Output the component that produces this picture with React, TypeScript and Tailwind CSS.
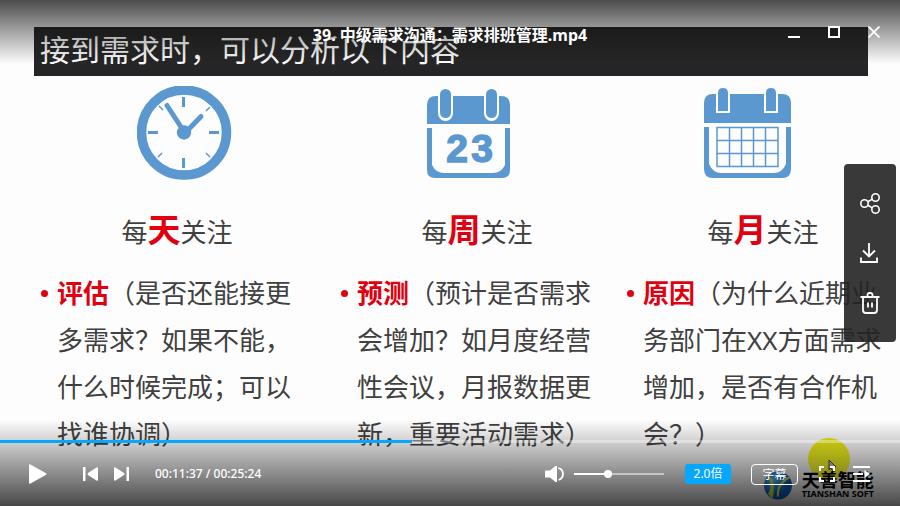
import { useState } from "react";

type Topic = {
  word: string;
  lead: string;
  lines: string[];
  icon: () => React.ReactElement;
  iconPad: string;
};

const BLUE = "#5b98d0";

function ClockIcon() {
  return (
    <svg width="95" height="96" viewBox="0 0 95 96" fill="none" stroke={BLUE} aria-hidden="true">
      <circle cx="47" cy="46.500" r="42.500" strokeWidth="9.500" />
      <path d="M46.500 11v10M46.500 72v10M11 46.500h10M72 46.500h10" strokeWidth="3" />
      <path d="M22 20l4 4M73 21l-4 4M21 71l4-4M73 71l-4-4" strokeWidth="1.500" />
      <path d="M30 19.500L46 44" strokeWidth="5" strokeLinecap="round" />
      <path d="M64 30.500L49 46" strokeWidth="5" strokeLinecap="round" />
      <circle cx="47" cy="46.500" r="7.200" fill={BLUE} stroke="none" />
    </svg>
  );
}

function DayCalendarIcon() {
  return (
    <svg width="84" height="96" viewBox="0 0 84 96" aria-hidden="true">
      <path d="M0 38V19q0-9 9-9h65q9 0 9 9v19z" fill={BLUE} />
      <path d="M0 42h5v37q4 8 12 8h49q8 0 12-8V42h5v42q0 8-8 8H8q-8 0-8-8z" fill={BLUE} />
      <rect x="11" y="1" width="15" height="34" rx="7.500" fill="#fdfdfd" />
      <rect x="57" y="1" width="15" height="34" rx="7.500" fill="#fdfdfd" />
      <rect x="13" y="3" width="11" height="29" rx="5.500" fill={BLUE} />
      <rect x="59" y="3" width="11" height="29" rx="5.500" fill={BLUE} />
      <text x="30 55" y="76" textAnchor="middle" fill={BLUE} stroke={BLUE} strokeWidth="1.500" fontSize="39" fontWeight="700" fontFamily="Liberation Sans, Arial, sans-serif">
        23
      </text>
    </svg>
  );
}

function MonthCalendarIcon() {
  return (
    <svg width="87" height="96" viewBox="0 0 87 96" aria-hidden="true">
      <path d="M0 37V17q0-9 9-9h69q9 0 9 9v20z" fill={BLUE} />
      <path d="M0 41h5v37q4 9 12 9h53q8 0 12-9V41h5v42q0 9-9 9H9q-9 0-9-9z" fill={BLUE} />
      <path d="M12 27V8q0-7 7-7t7 7v19zM60 27V8q0-7 7-7t7 7v19z" fill="#fdfdfd" />
      <path d="M14 25V7q0-5 5-5t5 5v18zM62 25V7q0-5 5-5t5 5v18z" fill={BLUE} />
      <path d="M13 41.500h61v39H13zM25.500 41v39M37.500 41v39M49.500 41v39M61.500 41v39M13 54.500h61M13 67.500h61" fill="none" stroke={BLUE} strokeWidth="1.500" />
    </svg>
  );
}

const topics: Topic[] = [
  {
    word: "天",
    lead: "评估",
    lines: ["（是否还能接更", "多需求？如果不能，", "什么时候完成；可以", "找谁协调）"],
    icon: ClockIcon,
    iconPad: "pl-24",
  },
  {
    word: "周",
    lead: "预测",
    lines: ["（预计是否需求", "会增加？如月度经营", "性会议，月报数据更", "新，重要活动需求）"],
    icon: DayCalendarIcon,
    iconPad: "pl-[86px]",
  },
  {
    word: "月",
    lead: "原因",
    lines: ["（为什么近期业", "务部门在XX方面需求", "增加，是否有合作机", "会？）"],
    icon: MonthCalendarIcon,
    iconPad: "pl-[77px]",
  },
];

function TopicColumn({ topic }: { topic: Topic }) {
  const Icon = topic.icon;
  return (
    <section className="whitespace-nowrap">
      <div className={topic.iconPad}>
        <Icon />
      </div>
      <h2 className="mt-[22px] flex h-14 w-[272px] items-baseline justify-center text-[26px] leading-[52px]">
        每<strong className="text-[33px] font-bold text-[#e0000f]">{topic.word}</strong>关注
      </h2>
      <div className="mt-[10px] flex text-[26px] leading-[47px]">
        <span className="flex h-[47px] w-4 shrink-0 items-center" aria-hidden="true">
          <span className="size-[7px] rounded-full bg-[#e0000f]" />
        </span>
        <p>
          <strong className="font-bold text-[#e0000f]">{topic.lead}</strong>
          {topic.lines.map((line, i) => (
            <span key={line}>
              {i > 0 && <br />}
              {line}
            </span>
          ))}
        </p>
      </div>
    </section>
  );
}

function Slide() {
  return (
    <div className="h-full bg-[#fdfdfd] pt-[27px] text-[#404040]">
      <h1 className="mr-8 ml-[34px] h-[49px] bg-linear-to-b from-[#2c2c2c] to-[#242426] pl-1.5 text-[30px] leading-[45px] whitespace-nowrap text-white">
        接到需求时，可以分析以下内容
      </h1>
      <div className="grid grid-cols-[300fr_286fr_273fr] pt-[10px] pl-[41px]">
        {topics.map((topic) => (
          <TopicColumn key={topic.word} topic={topic} />
        ))}
      </div>
      <div className="absolute right-[50px] bottom-[26px] size-[42px] rounded-full bg-linear-to-b from-[#eaed0a] to-[#ffff30]" />
      <svg className="absolute right-[62px] bottom-[32px]" width="10" height="15" viewBox="0 0 10 15" fill="#c8c8c8" stroke="#4a4a30" aria-hidden="true">
        <path d="M1 1v10l2-2 2 4 2-1-2-4h3z" />
      </svg>
      <div className="absolute right-[26px] bottom-1.5 flex items-center gap-2 text-black">
        <svg width="31" height="29" viewBox="0 0 31 29" aria-hidden="true">
          <defs>
            <radialGradient id="globe" cx="35%" cy="30%">
              <stop offset="0" stopColor="#5cc4ff" />
              <stop offset="1" stopColor="#1060c8" />
            </radialGradient>
          </defs>
          <circle cx="15" cy="14.500" r="14" fill="url(#globe)" />
          <path d="M4 6Q13 4 10 27q-3-1-5-4Q11 12 4 6zM14 26Q12 12 27 5q1 2-3 4Q15 15 16 25z" fill="#c8f050" />
        </svg>
        <div>
          <div className="text-lg leading-[16px] font-bold">天善智能</div>
          <div className="text-[9px] leading-[12px] font-bold">TIANSHAN SOFT</div>
        </div>
      </div>
    </div>
  );
}

function WindowBar() {
  return (
    <header className="absolute inset-x-0 top-0 h-16 bg-linear-to-b from-black/70 to-transparent text-white">
      <div className="grid grid-cols-[1fr_auto_1fr] items-center pt-[23px]">
        <h2 className="col-start-2 text-base leading-[24px] font-bold whitespace-nowrap">39. 中级需求沟通：需求排班管理.mp4</h2>
        <div className="flex justify-end gap-7 pr-5 pb-1.5">
          <button type="button" aria-label="最小化">
            <svg width="12" height="12" stroke="currentColor" strokeWidth="2"><path d="M0 11h12" /></svg>
          </button>
          <button type="button" aria-label="最大化">
            <svg width="12" height="12" fill="none" stroke="currentColor" strokeWidth="2"><path d="M1 1h10v10H1z" /></svg>
          </button>
          <button type="button" aria-label="关闭">
            <svg width="12" height="12" stroke="currentColor" strokeWidth="1.800"><path d="M.5 .5l11 11M11.500 .5l-11 11" /></svg>
          </button>
        </div>
      </div>
    </header>
  );
}

function SideTools() {
  return (
    <aside className="absolute top-[164px] right-1 flex w-[52px] flex-col items-center gap-7 rounded bg-[#232323]/90 pt-7 pb-7 text-white">
      <button type="button" aria-label="分享" className="h-[22px]">
        <svg width="22" height="22" viewBox="0 0 22 22" fill="none" stroke="currentColor" strokeWidth="1.600">
          <circle cx="5.500" cy="11.500" r="3.700" />
          <circle cx="16.500" cy="5.500" r="3.700" />
          <circle cx="16.500" cy="17.500" r="3.700" />
          <path d="M8.800 9.700l4.600-2.600M8.800 13.300l4.600 2.600" />
        </svg>
      </button>
      <button type="button" aria-label="下载" className="h-[22px]">
        <svg width="22" height="22" viewBox="0 0 22 22" fill="none" stroke="currentColor" strokeWidth="1.800">
          <path d="M10 1v13.500M4 8.500l6 6 6-6M2 15.500V20h16v-4.500" />
        </svg>
      </button>
      <button type="button" aria-label="删除" className="h-[22px]">
        <svg width="22" height="22" viewBox="0 0 22 22" fill="none" stroke="currentColor" strokeWidth="1.800">
          <path d="M1.500 5h19M8.500 5V3q0-2 2-2h1q2 0 2 2v2M4 5v13q0 3 3 3h8q3 0 3-3V5M9 10.500v5M13 10.500v5" />
        </svg>
      </button>
    </aside>
  );
}

function Controls() {
  const [position, setPosition] = useState(697);
  const [volume, setVolume] = useState(36);
  const played = (position / 1524) * 100;
  return (
    <footer className="absolute inset-x-0 bottom-0 flex h-[86px] flex-col bg-linear-to-b from-transparent to-black/72 pt-5 text-white">
      <input
        type="range"
        aria-label="播放进度"
        min={0}
        max={1524}
        value={position}
        onChange={(e) => setPosition(Number(e.target.value))}
        className="block h-[3px] w-full shrink-0 appearance-none [&::-webkit-slider-thumb]:size-0 [&::-webkit-slider-thumb]:appearance-none"
        style={{ background: `linear-gradient(to right, #06a7ff ${played}%, rgba(255,255,255,.35) ${played}%)` }}
      />
      <div className="flex h-[62px] items-center pr-[30px] pl-[29px]">
        <button type="button" aria-label="播放">
          <svg width="18" height="20" fill="currentColor"><path d="M0 1Q0 0 1.500 .5L17 9.200q1 .8 0 1.600L1.500 19.500Q0 20 0 19z" /></svg>
        </button>
        <button type="button" aria-label="上一个" className="ml-9">
          <svg width="15" height="14" fill="currentColor"><path d="M0 0h2.500v14H0zM15 1v12q-.5 1-1.500.5L5 8q-1-1 0-2L13.500.5Q14.500 0 15 1z" /></svg>
        </button>
        <button type="button" aria-label="下一个" className="ml-4">
          <svg width="15" height="14" fill="currentColor"><path d="M12.500 0H15v14h-2.500zM0 1v12q.5 1 1.500.5L10 8q1-1 0-2L1.500.5Q.5 0 0 1z" /></svg>
        </button>
        <span className="ml-[26px] text-xs font-medium whitespace-nowrap">00:11:37 / 00:25:24</span>
        <button type="button" aria-label="静音" className="ml-auto">
          <svg width="20" height="16" fill="currentColor">
            <path d="M0 4.500h5L10.500 0H12v16h-1.500L5 11.500H0z" />
            <path d="M13.500 2q4.500 1.500 4.500 6t-4.500 6" fill="none" stroke="currentColor" strokeWidth="1.800" />
          </svg>
        </button>
        <input
          type="range"
          aria-label="音量"
          value={volume}
          onChange={(e) => setVolume(Number(e.target.value))}
          className="ml-[9px] h-0.5 w-[90px] appearance-none [&::-webkit-slider-thumb]:size-2 [&::-webkit-slider-thumb]:appearance-none [&::-webkit-slider-thumb]:rounded-full [&::-webkit-slider-thumb]:bg-white"
          style={{ background: `linear-gradient(to right, #fff ${volume}%, rgba(255,255,255,.5) ${volume}%)` }}
        />
        <button type="button" className="ml-[21px] h-5 w-[46px] rounded-[3px] bg-[#06a7ff] text-xs leading-[20px]">2.0倍</button>
        <button type="button" className="ml-5 h-[21px] w-[47px] rounded border border-white text-xs leading-[19px]">字幕</button>
        <button type="button" aria-label="全屏" className="ml-[21px]">
          <svg width="16" height="16" fill="none" stroke="currentColor" strokeWidth="2"><path d="M5 1H1v4M11 1h4v4M5 15H1v-4M11 15h4v-4" /></svg>
        </button>
        <button type="button" aria-label="播放列表" className="ml-[18px]">
          <svg width="17" height="16" fill="currentColor"><path d="M0 0h17v2H0zM0 7h10v2H0zM0 14h17v2H0zM11.500 4l5.500 4-5.500 4z" /></svg>
        </button>
      </div>
    </footer>
  );
}

export default function App() {
  return (
    <main className="relative h-screen overflow-hidden font-['Noto_Sans','Noto_Sans_CJK_SC',sans-serif]" lang="zh-CN">
      <Slide />
      <WindowBar />
      <SideTools />
      <Controls />
    </main>
  );
}
